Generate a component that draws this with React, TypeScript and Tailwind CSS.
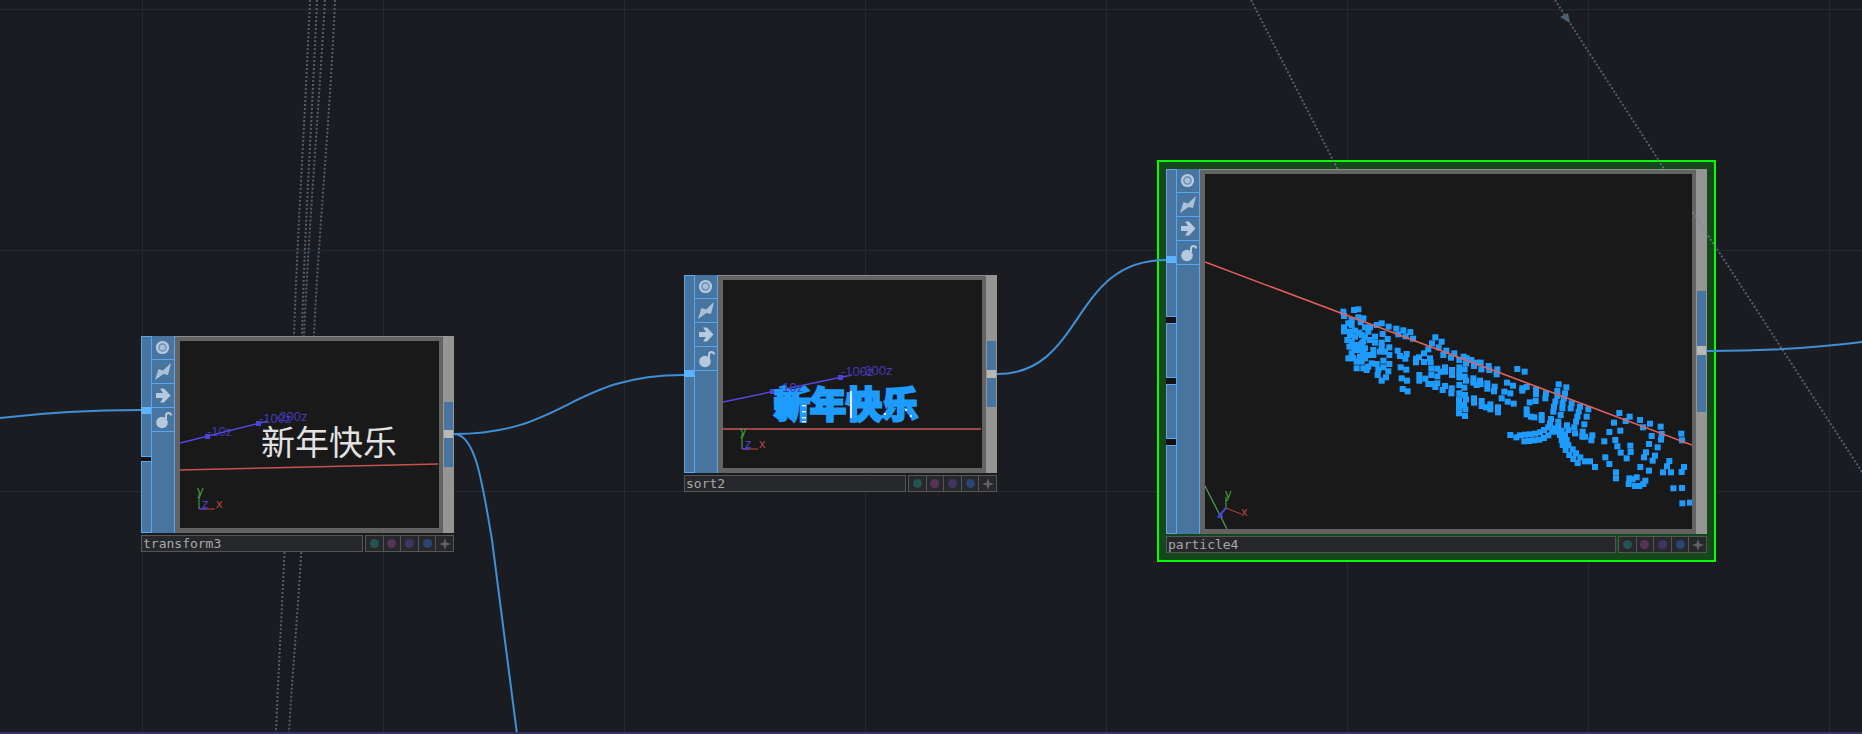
import React from "react";

// particle positions, read off a 3x crop starting at (1320,290)
const particles = [
  [70,65],[72,78],[102,60],[115,58],[115,82],[130,85],[122,97],[95,90],[85,100],[95,105],[72,112],[72,124],[90,125],[105,122],[118,128],[135,112],[150,112],[170,105],[185,100],[206,110],[145,125],[135,140],[125,135],[105,140],[90,135],[188,132],[165,140],[150,150],[165,158],[203,147],[185,158],[185,170],[82,150],[95,155],[110,165],[125,160],[135,175],[105,180],[95,190],[85,205],[100,205],[115,180],[130,190],[120,200],[110,215],[125,215],[135,205],[145,195],[160,180],[160,195],[180,185],[195,185],[208,172],[208,195],[190,212],[170,222],[155,220],[208,222],[190,232],[175,240],[205,244],[130,235],[140,240],[110,235],[145,230],[173,255],[198,262],[185,272],[88,170],[100,170],[120,175],[130,155],
  [229,116],[250,121],[271,126],[235,133],[257,139],[279,146],[233,182],[240,198],[260,192],[256,206],[242,232],[259,239],[245,265],[261,272],[248,297],[263,304],
  [346,142],[365,155],[336,160],[356,172],[325,178],[379,182],[312,190],[370,195],[403,190],[393,203],[297,202],[288,206],[288,217],[330,205],[312,216],[332,217],[418,210],[431,200],[440,205],[438,220],[454,210],[470,218],[482,218],[462,228],[484,238],[506,228],[508,240],[532,238],[530,253],[592,237],[614,245],
  [334,236],[352,236],[362,245],[375,232],[375,245],[396,240],[396,255],[418,232],[434,238],[418,248],[434,260],[418,262],[438,272],[334,255],[352,259],[298,255],[298,272],[316,266],[325,282],[335,282],[352,280],[346,291],[375,288],[368,300],[395,295],[394,310],[418,285],[433,293],[418,310],[435,315],[438,328],[417,328],[432,345],[417,338],[417,353],[436,358],[417,370],[435,378],
  [460,265],[460,278],[480,272],[470,285],[482,282],[502,280],[502,296],[524,290],[522,304],[553,305],[571,310],[545,325],[563,335],[581,341],[462,325],[462,338],[485,333],[485,348],[498,352],[511,343],[511,358],[534,352],[534,367],
  [561,278],[579,287],[607,295],[607,302],[620,291],[629,337],[647,333],[620,358],[620,373],[633,380],[643,382],[665,375],[665,390],[648,298],[648,313],[678,310],[676,325],
  [716,283],[739,292],[712,303],[712,318],[735,310],[732,325],[706,335],[728,340],[702,350],[727,355],[700,365],[722,375],[693,387],[715,395],[690,400],[755,340],[752,355],[780,350],[805,358],[776,365],[800,380],[772,380],[768,395],[793,403],[763,412],[741,406],[745,420],[765,430],[788,425],[787,440],[795,440],[817,436],[814,451],
  [571,435],[589,442],[600,436],[615,434],[630,433],[645,431],[660,427],[672,420],[685,412],[613,454],[628,453],[643,451],[658,449],[672,444],[685,436],[697,425],[703,415],[715,410],[712,425],[720,435],[725,422],[735,435],[725,450],[740,450],[728,465],[745,465],[737,480],[758,478],[748,495],[768,490],[760,507],[781,502],[773,519],[795,514],[810,514],[825,531],
  [898,369],[929,380],[882,398],[917,393],[960,390],[990,401],[969,412],[1022,410],[901,422],[868,426],[853,454],[886,450],[892,469],[902,488],[931,467],[932,486],[920,505],[856,502],[868,522],[888,547],[888,565],[1025,432],[1023,449],[995,438],[987,462],[1013,472],[978,487],[972,502],[1005,497],[998,512],[961,531],[987,542],[1048,513],[1041,529],[1029,547],[1053,547],[1092,531],[1085,546],[1084,431],[1086,451],[1060,595],[1086,594],[1087,640],[1110,638],
  [928,565],[938,568],[950,562],[926,582],[945,588],[958,588],[970,582],[976,572],
];

const TargetIcon = () => (
  <svg viewBox="0 0 22 23" className="h-full w-full">
    <circle cx="10.5" cy="11.5" r="6.6" fill="#b6c9de" />
    <circle cx="10.5" cy="11.5" r="4.4" fill="#6f93b8" />
    <circle cx="10.5" cy="11.5" r="2.8" fill="#a9c0d8" />
  </svg>
);

const BoltIcon = () => (
  <svg viewBox="0 0 22 23" className="h-full w-full">
    <polygon points="3,20 6.5,9 11,10.5 19,3 16,15 11.5,14" fill="#a9c0d8" />
  </svg>
);

const ArrowIcon = () => (
  <svg viewBox="0 0 22 23" className="h-full w-full">
    <polygon points="4,9 11,9 8,4.5 12,4.5 18.5,11.5 12,18.5 8,18.5 11,14 4,14" fill="#b6c9de" />
  </svg>
);

const LockIcon = () => (
  <svg viewBox="0 0 22 23" className="h-full w-full">
    <circle cx="10" cy="14.5" r="5.8" fill="#b6c9de" />
    <path d="M14 11V7.5a2.5 2.5 0 0 1 5 0" fill="none" stroke="#b6c9de" strokeWidth="2" />
  </svg>
);

const IconColumn = () => (
  <div className="flex w-[24px] shrink-0 flex-col border-x border-[#5aa5ee] bg-[#47759f]">
    {[TargetIcon, BoltIcon, ArrowIcon, LockIcon].map((Icon, i) => (
      <div key={i} className="h-[24px] border-b border-[#5aa5ee]">
        <Icon />
      </div>
    ))}
  </div>
);

const LabelRow = ({ name }: { name: string }) => (
  <div className="flex h-[17px] shrink-0 gap-[2px]">
    <div className="flex-1 border border-[#555555] bg-[#27282b] pl-[1px] font-['DejaVu_Sans_Mono',monospace] text-[13px] leading-[15px] text-[#a8a8a8]">
      {name}
    </div>
    <div className="flex w-[89px] border border-[#555555] bg-[#27282b]">
      {["bg-[#26524f]", "bg-[#563458]", "bg-[#413465]", "bg-[#2b4470]"].map((c) => (
        <div key={c} className="flex flex-1 items-center justify-center border-r border-[#555555]">
          <div className={`h-[9px] w-[9px] rounded-full ${c}`} />
        </div>
      ))}
      <div className="flex flex-1 items-center justify-center">
        <svg viewBox="0 0 12 12" className="h-[12px] w-[12px]">
          <polygon points="6,0 7.4,4.6 12,6 7.4,7.4 6,12 4.6,7.4 0,6 4.6,4.6" fill="#626262" />
        </svg>
      </div>
    </div>
  </div>
);

type NodeProps = {
  name: string;
  className: string;
  segments: string[];
  stripGap: string;
  connector: string;
  outTop: string;
  outA: string;
  outBand: string;
  outB: string;
  children: React.ReactNode;
};

const OpNode = ({ name, className, segments, stripGap, connector, outTop, outA, outBand, outB, children }: NodeProps) => (
  <div className={`flex flex-col gap-[2px] ${className}`}>
    <div className="flex min-h-0 flex-1">
      {/* inputs */}
      <div className={`relative flex w-[10px] shrink-0 flex-col bg-[#121212] ${stripGap}`}>
        {segments.map((s, i) => (
          <div key={i} className={`border border-r-0 border-[#5aa5ee] bg-[#47759f] ${s}`} />
        ))}
        <div className={`absolute left-0 h-[7px] w-[10px] bg-[#5fb2ff] ${connector}`} />
      </div>
      <IconColumn />
      {/* viewer */}
      <div className="min-w-0 flex-1 border-t border-[#8c8c8c] bg-[#636363] pb-[5px] pl-[5px] pr-[4px] pt-[4px]">
        <div className="h-full w-full bg-[#191919]">{children}</div>
      </div>
      {/* outputs */}
      <div className={`flex w-[11px] shrink-0 flex-col bg-[#959595] px-[1px] ${outTop}`}>
        <div className={`bg-[#47759f] ${outA}`} />
        <div className={`bg-[#b8b8b8] ${outBand}`} />
        <div className={`bg-[#47759f] ${outB}`} />
      </div>
    </div>
    <LabelRow name={name} />
  </div>
);

const Axis = ({ x, y }: { x: number; y: number }) => (
  <g fontSize="13">
    <line x1={x} y1={y} x2={x} y2={y - 15} stroke="#3f9a3f" strokeWidth="1.2" />
    <line x1={x} y1={y} x2={x + 16} y2={y} stroke="#a83c3c" strokeWidth="1.2" />
    <line x1={x} y1={y} x2={x + 8} y2={y} stroke="#4a44d8" strokeWidth="1.2" />
    <text x={x - 2} y={y - 14} fill="#3f9a3f">y</text>
    <text x={x + 3} y={y - 1} fill="#4a44c8">z</text>
    <text x={x + 17} y={y - 1} fill="#b04444">x</text>
  </g>
);

export default function App() {
  return (
    <div className="relative h-screen w-full overflow-hidden border-b-2 border-[#33345e] bg-[#1a1c21] bg-[linear-gradient(#26292f_1px,transparent_1px),linear-gradient(90deg,#26292f_1px,transparent_1px)] bg-[size:241px_241px] bg-[position:142px_9px]">
      {/* wires */}
      <svg viewBox="0 0 1862 734" className="absolute left-0 top-0 h-[734px] w-[1862px]" fill="none">
        <g stroke="#4f5f6e" strokeWidth="2" strokeDasharray="2 2">
          <path d="M310 0C305 120 297 240 294 336" />
          <path d="M317 0C312 120 304 240 302 336" />
          <path d="M325 0C318 120 308 240 304 336" />
          <path d="M335 0C330 120 318 240 314 336" />
          <path d="M285 540C282 610 278 680 276 732" />
          <path d="M302 540C298 610 292 680 289 732" />
          <path d="M1251 0L1338 170" />
          <path d="M1555 0L1665 170" />
          <path d="M1693 212L1862 472" />
        </g>
        <polygon points="1560,17 1568,13 1570,23" fill="#4f5f6e" />
        <g stroke="#3f8fd6" strokeWidth="2">
          <path d="M0 418C50 412 95 410 141 410" />
          <path d="M454 434C565 434 570 375 684 375" />
          <path d="M454 434C475 434 482 480 492 540L517 734" />
        </g>
      </svg>

      <OpNode
        name="transform3"
        className="absolute left-[141px] top-[336px] h-[216px] w-[313px]"
        segments={["h-[121px]", "flex-1"]}
        stripGap="gap-[4px]"
        connector="top-[71px]"
        outTop="pt-[66px]"
        outA="h-[28px]"
        outBand="h-[8px]"
        outB="h-[29px]"
      >
        <svg viewBox="180 341 259 187" className="block h-full w-full font-['Liberation_Sans',sans-serif]">
          <line x1="180" y1="443" x2="268" y2="421" stroke="#5548e0" strokeWidth="1.5" />
          <rect x="205" y="434" width="5" height="5" fill="#4a44d8" />
          <rect x="256" y="421" width="5" height="5" fill="#4a44d8" />
          <g fontSize="13" fill="#443ab8">
            <text x="207" y="436">-10z</text>
            <text x="259" y="423">-100z</text>
            <text x="275" y="421">-200z</text>
          </g>
          <line x1="180" y1="470" x2="438" y2="464" stroke="#c85050" strokeWidth="1.5" />
          <text x="261" y="455" fontSize="34" fill="#e2e2e2" className="font-['Noto_Sans_CJK_SC',sans-serif]">新年快乐</text>
          <Axis x={199} y={509} />
        </svg>
      </OpNode>

      <OpNode
        name="sort2"
        className="absolute left-[684px] top-[275px] h-[217px] w-[313px]"
        segments={["flex-1"]}
        stripGap=""
        connector="top-[95px]"
        outTop="pt-[66px]"
        outA="h-[29px]"
        outBand="h-[8px]"
        outB="h-[29px]"
      >
        <svg viewBox="723 280 259 188" className="block h-full w-full font-['Liberation_Sans',sans-serif]">
          <line x1="723" y1="402" x2="852" y2="375" stroke="#5548e0" strokeWidth="1.5" />
          <rect x="770" y="389" width="5" height="5" fill="#4a44d8" />
          <rect x="838" y="375" width="5" height="5" fill="#4a44d8" />
          <text
            x="774"
            y="418"
            fontSize="36"
            fontWeight="700"
            fill="#1e9bff"
            stroke="#1e9bff"
            strokeWidth="3"
            className="font-['Noto_Sans_CJK_SC',sans-serif]"
          >
            新年快乐
          </text>
          <g fill="#e8e8e8">
            <rect x="850" y="391" width="2" height="27" />
            <rect x="802" y="405" width="4" height="1.5" />
            <rect x="802" y="411" width="4" height="1.5" />
            <rect x="802" y="417" width="4" height="1.5" />
            <rect x="802" y="421" width="4" height="1.5" />
            <rect x="905" y="409" width="2" height="2" />
            <rect x="910" y="415" width="2" height="2" />
            <rect x="884" y="413" width="2" height="2" />
          </g>
          <g fontSize="13" fill="#443ab8">
            <text x="778" y="392">-10z</text>
            <text x="841" y="376">-100z</text>
            <text x="860" y="375">-200z</text>
          </g>
          <line x1="723" y1="429" x2="981" y2="429" stroke="#a04545" strokeWidth="2" />
          <Axis x={742} y={449} />
        </svg>
      </OpNode>

      {/* selected node */}
      <div className="absolute left-[1157px] top-[160px] h-[402px] w-[559px] border-2 border-[#00ff00] bg-[#14471a] p-[7px]">
        <OpNode
          name="particle4"
          className="h-full w-full"
          segments={["h-[148px]", "h-[55px]", "h-[55px]", "flex-1"]}
          stripGap="gap-[6px]"
          connector="top-[87px]"
          outTop="pt-[122px]"
          outA="h-[55px]"
          outBand="h-[9px]"
          outB="h-[57px]"
        >
          <svg viewBox="1205 174 487 355" className="block h-full w-full font-['Liberation_Sans',sans-serif]">
            <g fill="#1e9bff">
              {particles.map(([x, y], i) => (
                <rect key={i} x={1320 + x / 3 - 3} y={290 + y / 3 - 3} width="6" height="6" />
              ))}
            </g>
            <line x1="1205" y1="262" x2="1692" y2="445" stroke="#e06060" strokeWidth="1.5" />
            <line x1="1205" y1="486" x2="1227" y2="529" stroke="#4fa54f" strokeWidth="1.2" />
            <line x1="1226" y1="508" x2="1226" y2="497" stroke="#3f9a3f" strokeWidth="1.2" />
            <line x1="1226" y1="508" x2="1241" y2="514" stroke="#a83c3c" strokeWidth="1.2" />
            <line x1="1226" y1="508" x2="1218" y2="517" stroke="#4a44d8" strokeWidth="2" />
            <polygon points="1217,518 1222,512 1223,518" fill="#4a44d8" />
            <text x="1225" y="498" fontSize="13" fill="#3f9a3f">y</text>
            <text x="1241" y="516" fontSize="13" fill="#b04444">x</text>
          </svg>
        </OpNode>
      </div>

      {/* wires and links that run over the selected node's frame */}
      <svg viewBox="0 0 1862 734" className="pointer-events-none absolute left-0 top-0 h-[734px] w-[1862px]" fill="none">
        <g stroke="#7d8a96" strokeWidth="2" strokeDasharray="2 2" opacity="0.7">
          <path d="M1333 160L1338 170" />
          <path d="M1658 160L1665 170" />
          <path d="M1693 212L1716 248" />
        </g>
        <g stroke="#3f8fd6" strokeWidth="2">
          <path d="M997 374C1085 374 1070 260 1166 260" />
          <path d="M1707 351C1770 351 1815 348 1862 342" />
        </g>
      </svg>
    </div>
  );
}
